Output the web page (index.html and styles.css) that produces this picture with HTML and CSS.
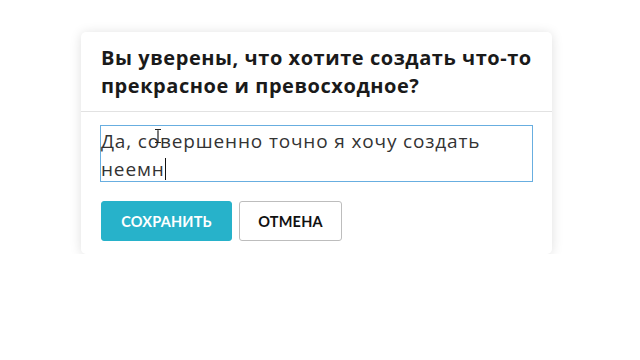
FILE: index.html
```html
<!DOCTYPE html>
<html lang="ru">
<head>
<meta charset="utf-8">
<link rel="stylesheet" href="styles.css">
</head>
<body>
<div class="card">
  <div class="card-head">
    <h2 class="title">Вы уверены, что хотите создать <span class="nowrap">что-то</span> прекрасное и превосходное?</h2>
  </div>
  <div class="card-body">
    <div class="field">Да, совершенно точно я хочу создать неемн<span class="caret"></span></div>
    <svg class="ibeam" width="8" height="16" viewBox="0 0 8 16"><path d="M1 1.5h2.5l0.5 0.5 0.5-0.5H7M4 2v12M1 14.5h2.5l0.5-0.5 0.5 0.5H7" fill="none" stroke="#222" stroke-width="1.2"/></svg>
    <div class="actions">
      <button class="btn btn-primary">Сохранить</button>
      <button class="btn btn-default">Отмена</button>
    </div>
  </div>
</div>
</body>
</html>
```
FILE: styles.css
```css
html, body {
  margin: 0;
  padding: 0;
  background: #fff;
}
body {
  padding: 32px 0 0 81px;
  font-family: "Open Sans", sans-serif;
}
.card {
  width: 471px;
  background: #fff;
  border-radius: 5px;
  box-shadow: 0 1px 12px rgba(0,0,0,0.13);
}
.card-head {
  padding: 12px 10px 11px 20px;
  border-bottom: 1px solid #e2e2e2;
}
.title {
  margin: 0;
  font-family: "Open Sans", sans-serif;
  font-size: 20px;
  line-height: 28px;
  font-weight: 700;
  letter-spacing: 0.55px;
  color: #1a1a1a;
}
.nowrap {
  white-space: nowrap;
}
.card-body {
  position: relative;
  padding: 13px 19px 13px 19px;
}
.field {
  width: 431px;
  height: 54px;
  border: 1px solid #68aee0;
  padding: 1px 0 0 0;
  box-sizing: content-box;
  font-family: "Open Sans", sans-serif;
  font-size: 19px;
  line-height: 28px;
  letter-spacing: 0.85px;
  color: #333;
  font-weight: 400;
}
.caret {
  display: inline-block;
  width: 1px;
  height: 22px;
  background: #111;
  vertical-align: -4px;
}
.ibeam {
  position: absolute;
  left: 73px;
  top: 16px;
}
.actions {
  display: flex;
  gap: 7px;
  margin-top: 19px;
  padding-left: 1px;
}
.btn {
  height: 40px;
  border-radius: 3px;
  font-family: "Lato", sans-serif;
  font-weight: 700;
  font-size: 14.5px;
  text-transform: uppercase;
  letter-spacing: 0.2px;
  cursor: pointer;
}
.btn-primary {
  width: 131px;
  background: #27b2ca;
  border: 1px solid #27b2ca;
  color: #fff;
}
.btn-default {
  width: 103px;
  background: #fff;
  border: 1px solid #bdbdbd;
  color: #111;
}
```
